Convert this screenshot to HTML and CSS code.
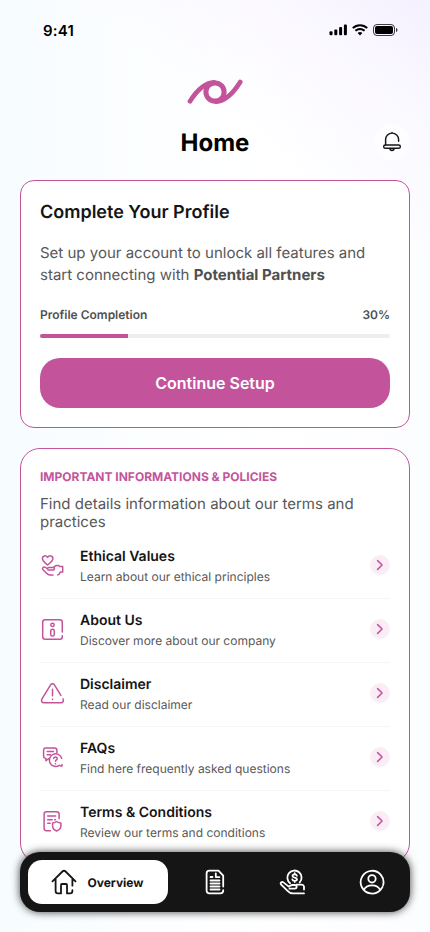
FILE: index.html
```html
<!DOCTYPE html>
<html lang="en">
<head>
<meta charset="utf-8">
<meta name="viewport" content="width=device-width, initial-scale=1">
<title>Home</title>
<link rel="stylesheet" href="styles.css">
</head>
<body>
<div class="screen">
  <header class="status">
    <span class="time">9:41</span>
    <span class="indicators">
      <svg width="18" height="12" viewBox="0 0 18 12"><rect x="0.500" y="7.3" width="3" height="3.9" rx="1"/><rect x="5.300" y="5.4" width="3" height="5.8" rx="1"/><rect x="10.100" y="3" width="3" height="8.200" rx="1"/><rect x="14.900" y="0.400" width="3" height="10.800" rx="1"/></svg>
      <svg width="16" height="12" viewBox="0 0 16 12"><g fill="none" stroke="#000" stroke-width="2"><path d="M.8 4.100C4.900.2 11.100.2 15.200 4.100"/><path d="M3.400 6.800c2.600-2.400 6.600-2.400 9.200 0"/></g><path d="M5.600 8.900c1.400-1.200 3.400-1.200 4.800 0L8 11.400z"/></svg>
      <svg width="25" height="12" viewBox="0 0 25 12"><rect x=".5" y=".5" width="21" height="11" rx="3.500" fill="none" stroke="#000" stroke-opacity=".75"/><rect x="2" y="2" width="18" height="8" rx="2"/><path d="M23 4v4c.9-.3 1.500-1.100 1.500-2S23.900 4.300 23 4z" fill-opacity=".75"/></svg>
    </span>
  </header>

  <div class="brand">
    <svg width="56" height="26" viewBox="0 0 56 26" fill="none" stroke="#c3549c" stroke-linecap="round" stroke-linejoin="round">
      <circle cx="28" cy="13" r="9.100" stroke-width="5"/>
      <path d="M3 22.200C9 12.600 17 3.900 27 3.300" stroke-width="4.700"/>
      <path d="M53.200 3C47 13 39 22 29 22.700" stroke-width="4.700"/>
    </svg>
  </div>

  <div class="heading">
    <h1>Home</h1>
    <button class="bell" aria-label="Notifications">
      <svg width="20" height="22" viewBox="0 0 20 22" fill="none" stroke="#151515" stroke-width="1.450" stroke-linecap="round" stroke-linejoin="round">
        <path d="M3.600 14V8.600a6.500 6.500 0 0 1 13 0v1.700M10 2V1.400"/>
        <rect x="1.700" y="14" width="16.600" height="3.300" rx="1.600"/>
        <path d="M8 17.600c0 2.500 4 2.500 4 0"/>
      </svg>
    </button>
  </div>

  <section class="card profile">
    <h2>Complete Your Profile</h2>
    <p class="intro">Set up your account to unlock all features and<br>start connecting with <strong>Potential Partners</strong></p>
    <div class="progress-label"><span>Profile Completion</span><span>30%</span></div>
    <div class="track"><div class="fill"></div></div>
    <button class="primary">Continue Setup</button>
  </section>

  <section class="card policies">
    <h3>IMPORTANT INFORMATIONS &amp; POLICIES</h3>
    <p class="summary">Find details information about our terms and practices</p>
    <ul>
      <li>
        <svg class="icon" viewBox="0 0 25 25"><path d="M7.600 12C5.200 9.900 2.400 8.200 2.400 5.600c0-3.100 3.600-3.700 5.200-1.200 1.600-2.500 5.300-1.900 5.300 1.200 0 2.600-2.900 4.300-5.300 6.400z"/><path d="M8 17h5c2 0 2-2.500 0-2.500H9.400c-1-.1-1.700.5-2.300 1.200l-1.400-1.200c-1.800-1.300-4 .3-2.800 2l3.600 3.800c1 1.100 2 1.600 3.500 1.600h3M13.500 14.500c1.100-1.200 1.800-1.900 3.400-1.900h1.300c.8 0 1.300.8 2 .8h2.500v5.500h-2.100c-.9.200-.8 1.600-1.700 2.500l-1.200.5"/></svg>
        <div class="copy"><h4>Ethical Values</h4><p>Learn about our ethical principles</p></div>
        <span class="go"><svg viewBox="0 0 20 20"><path d="M7.600 5.600l4.500 4.400-4.500 4.400"/></svg></span>
      </li>
      <li>
        <svg class="icon" viewBox="0 0 25 25"><path d="M22.300 15V5.200c0-1.700-.8-2.500-2.500-2.500H5.200c-1.700 0-2.500.8-2.500 2.500v14.600c0 1.700.8 2.500 2.500 2.500h14.600c1.700 0 2.500-.8 2.500-2.500v-1"/><circle cx="12.500" cy="7.900" r="1.700"/><rect x="10.700" y="12.200" width="3.600" height="6.900" rx="1.700"/></svg>
        <div class="copy"><h4>About Us</h4><p>Discover more about our company</p></div>
        <span class="go"><svg viewBox="0 0 20 20"><path d="M7.600 5.600l4.500 4.400-4.500 4.400"/></svg></span>
      </li>
      <li>
        <svg class="icon" viewBox="0 0 25 25"><path d="M20.900 14.400L14.400 3.900c-.9-1.500-2.900-1.500-3.800 0L2 17.900c-1.200 2.200-.2 3.900 2 3.900h17c2.100 0 3-1.900 2-3.900"/><path d="M12.500 8.300v6.500M12.500 18.300v.1"/></svg>
        <div class="copy"><h4>Disclaimer</h4><p>Read our disclaimer</p></div>
        <span class="go"><svg viewBox="0 0 20 20"><path d="M7.600 5.600l4.500 4.400-4.500 4.400"/></svg></span>
      </li>
      <li>
        <svg class="icon" viewBox="0 0 25 25"><path d="M16.900 7.600V5.300c0-1.500-.8-2.300-2.300-2.300H5.900c-1.500 0-2.300.8-2.300 2.300v5.800c0 1.500.8 2.300 2.300 2.300v2.300l3.200-2.300M7.200 6.600h6.200M7.200 9.800h3.300"/><path d="M21.700 13.200a6.300 6.300 0 1 0-2.300 7.100c1 .9 1.500.9 2.600.7v-1.600"/><path d="M13.700 13.600c0-2.300 3.500-2.300 3.500 0 0 1.300-1.700 1.300-1.700 2.700M15.500 18.600v.1"/></svg>
        <div class="copy"><h4>FAQs</h4><p>Find here frequently asked questions</p></div>
        <span class="go"><svg viewBox="0 0 20 20"><path d="M7.600 5.600l4.500 4.400-4.500 4.400"/></svg></span>
      </li>
      <li>
        <svg class="icon" viewBox="0 0 25 25"><path d="M19.100 9.800V5.100c0-1.600-.8-2.400-2.400-2.400H6.500c-1.600 0-2.400.8-2.400 2.400v14.200c0 1.600.8 2.400 2.400 2.400h3.900M7.700 6.900h7.900M7.700 10.700h4.500M7.700 14.200h2.400M14.600 10.700h.8"/><path d="M12.600 14c1.600 0 2.500-.5 4-1.500 1.300 1 2.300 1.500 4.300 1.500v3.100c0 2.600-1.800 4-4.200 4.900-2.500-.9-4.100-2.300-4.100-4.900z"/></svg>
        <div class="copy"><h4>Terms &amp; Conditions</h4><p>Review our terms and conditions</p></div>
        <span class="go"><svg viewBox="0 0 20 20"><path d="M7.600 5.600l4.500 4.400-4.500 4.400"/></svg></span>
      </li>
    </ul>
  </section>

  <nav class="tabs">
    <a class="tab active">
      <svg viewBox="0 0 26 26"><path d="M1.500 12.300L11.400 2.500c1-1 2.200-1 3.200 0l9.900 9.800M4.600 10v12c0 1.600.8 2.400 2.400 2.400h3V16c0-.7.300-1 1-1h4c.7 0 1 .3 1 1v8.400h3c1.600 0 2.400-.8 2.400-2.400v-.8M21.400 10.500v6.200"/></svg>
      <span>Overview</span>
    </a>
    <a class="tab" aria-label="Documents"><svg viewBox="0 0 26 26"><path d="M21.200 17.500V6.600l-4.700-5H7.400C5.500 1.600 4.600 2.500 4.600 4.400v17.200c0 1.900.9 2.800 2.800 2.800h11c1.900 0 2.800-.9 2.800-2.800v-.5M13.800 4.300v3.800h3.600M8.500 8h2M8.500 11.500h9M8.500 14.500h9M8.500 17.500h9M8.500 20.500h9"/></svg></a>
    <a class="tab" aria-label="Funding"><svg viewBox="0 0 26 26"><path d="M11.100 14.200a7.100 7.100 0 1 1 9.600-.8"/><path d="M17.900 6.800c-.3-1.900-4.400-1.800-4.400.1 0 2.200 4.500 1.200 4.500 3.400 0 2-4.300 2.100-4.700.1M15.700 4.200v1M15.700 12v1M25 17.500c-.3-1.300-1-1.800-2.400-1.800h-5M10.500 19.700h5.200c2.600 0 2.600-3.700 0-3.700h-2.200c-1.600 0-2.500 1-3.700 1.600L4.400 13.400c-1.600-1.200-3.600.7-2.200 2.300l6.400 6.200c1.600 1.800 3 2.500 5.200 2.500H25M25 17.500v3"/></svg></a>
    <a class="tab" aria-label="Account"><svg viewBox="0 0 26 26"><path d="M21.500 20.900A11.400 11.400 0 1 1 24.100 16.200M21.500 20.900c1-1 1.500-2 2-3M4.800 21c3-6.300 13.400-6.300 16.400 0"/><circle cx="13" cy="9.800" r="3.700"/></svg></a>
  </nav>
</div>
</body>
</html>
```
FILE: styles.css
```css
* { box-sizing: border-box; }
body, h1, h2, h3, h4, p, ul { margin: 0; padding: 0; }
body {
  font-family: Inter, "Liberation Sans", sans-serif;
  color: #151515;
  text-rendering: geometricPrecision;
}
button { font: inherit; border: 0; padding: 0; }

.screen {
  width: 430px;
  height: 932px;
  overflow: hidden;
  position: relative;
  padding: 0 20px;
  background:
    linear-gradient(215deg, #f5f1ff 0, rgba(250, 247, 255, .7) 10%, rgba(255, 255, 255, 0) 21%),
    linear-gradient(90deg, #f7fcff 0, #fcfeff 33%, #fff 60%, #fcfdff 100%);
}

.status {
  height: 60px;
  padding: 0 12px 0 23px;
  display: flex;
  align-items: center;
  justify-content: space-between;
}
.time { font-size: 15px; font-weight: 600; color: #000; letter-spacing: .2px; }
.indicators { display: flex; align-items: center; gap: 5px; }
.indicators svg { display: block; }

.brand { height: 50px; padding-top: 19px; display: flex; justify-content: center; }
.brand svg { display: block; }

.heading {
  height: 70px;
  display: grid;
  grid-template-columns: 36px 1fr 36px;
  align-items: center;
  padding-bottom: 6px;
}
.heading h1 { grid-column: 2; text-align: center; font-size: 24px; line-height: 30px; font-weight: 700; color: #000; padding-top: 1px; }
.bell { width: 36px; height: 36px; border-radius: 50%; background: rgba(255, 255, 255, .6); display: grid; place-items: center; }

.card { border: 1px solid #c3549c; background: #fff; padding: 0 19px; }

.profile { height: 248px; border-radius: 14px; padding-top: 20px; }
.profile h2 { font-size: 18px; line-height: 24px; font-weight: 600; }
.intro { margin-top: 17px; font-size: 15px; line-height: 22px; font-weight: 400; color: #585858; }
.intro strong { font-weight: 700; color: #505050; }
.progress-label {
  display: flex;
  justify-content: space-between;
  margin-top: 20px;
  font-size: 12px;
  line-height: 18px;
  font-weight: 600;
  color: #505050;
}
.track { height: 4px; margin-top: 10px; border-radius: 2px; background: #eee; overflow: hidden; }
.fill { width: 25%; height: 100%; background: #c3549c; }
.primary {
  display: block;
  width: 100%;
  height: 50px;
  margin-top: 20px;
  border-radius: 20px;
  background: #c3549c;
  color: #fff;
  font-size: 16px;
  font-weight: 600;
}

.policies { margin-top: 20px; height: 415px; border-radius: 20px; padding-top: 20px; }
.policies h3 { font-size: 12px; line-height: 16px; font-weight: 700; color: #c3549c; }
.summary { margin-top: 10px; font-size: 15px; line-height: 18px; font-weight: 400; color: #585858; }
.policies ul { list-style: none; margin-top: 4px; }
.policies li {
  height: 64px;
  display: flex;
  align-items: center;
  border-bottom: 1px solid #f6f6f6;
  padding-bottom: 2px;
}
.policies li:last-child { border-bottom-color: transparent; }
.icon { width: 25px; height: 25px; fill: none; stroke: #c3549c; stroke-width: 1.5; stroke-linecap: round; stroke-linejoin: round; }
.copy { flex: 1; margin-left: 15px; }
.copy h4 { font-size: 14px; line-height: 20px; font-weight: 600; padding-top: 1px; }
.copy p { margin-top: 1px; padding-bottom: 1px; font-size: 12px; line-height: 17px; color: #585858; }
.go { width: 20px; height: 20px; border-radius: 50%; background: #fbedf5; margin-bottom: 1px; }
.go svg { display: block; fill: none; stroke: #c3549c; stroke-width: 1.5; stroke-linecap: round; stroke-linejoin: round; }

.tabs {
  position: absolute;
  left: 20px;
  top: 852px;
  width: 390px;
  height: 60px;
  padding: 8px;
  border-radius: 20px;
  background: #151515;
  box-shadow: 0 0 8px rgba(0, 0, 0, .75);
  display: grid;
  grid-template-columns: 140px 94px 60px 1fr;
}
.tab { display: flex; align-items: center; justify-content: center; }
.tab svg { width: 26px; height: 26px; fill: none; stroke: #fff; stroke-width: 1.8; stroke-linecap: round; stroke-linejoin: round; }
.tab.active { height: 44px; border-radius: 14px; background: #fff; gap: 10px; font-size: 12px; font-weight: 700; padding-right: 1px; }
.tab.active svg { stroke: #151515; }
.tab:last-child { padding-left: 20px; }
```
